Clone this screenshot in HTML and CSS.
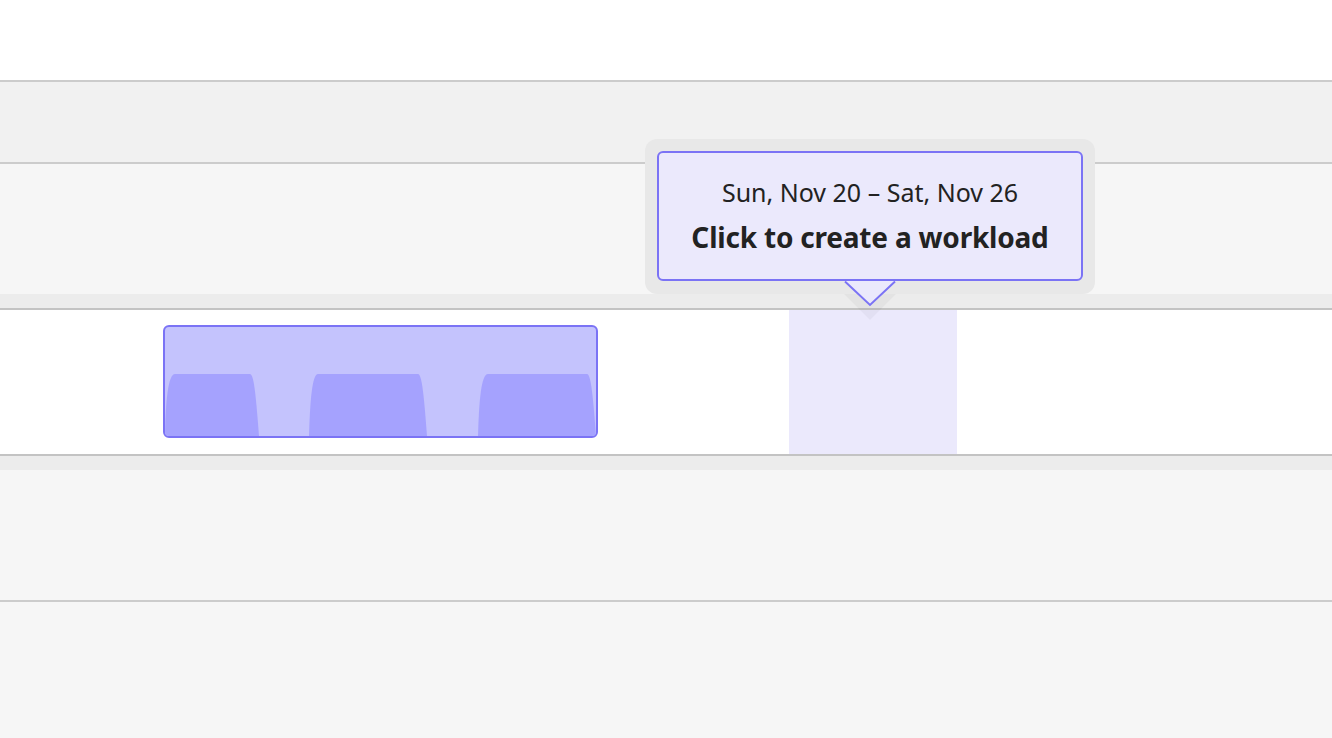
FILE: index.html
```html
<!DOCTYPE html>
<html>
<head>
<meta charset="utf-8">
<link rel="stylesheet" href="styles.css">
</head>
<body>
<div class="page">
  <div class="top-space"></div>
  <div class="band band-header"></div>
  <div class="band band-group"></div>
  <div class="gap-band"></div>
  <div class="row-lane">
    <div class="workload">
      <svg class="workload-chart" viewBox="0 0 431 109" preserveAspectRatio="none">
        <path d="M0,109 C0.5,75 3,47 10,47 L85,47 C89,47 91,70 94,109 Z"/>
        <path d="M144,109 C145,75 147,47 153,47 L253,47 C257,47 259,70 262,109 Z"/>
        <path d="M313,109 C314,75 316,47 323,47 L422,47 C426,47 428,70 431,109 Z"/>
      </svg>
    </div>
    <div class="week-hover"></div>
  </div>
  <div class="gap-band gap-band-bottom"></div>
  <div class="band band-lower"></div>
  <div class="band band-last"></div>

  <div class="tooltip">
    <div class="tooltip-box">
      <div class="tooltip-date">Sun, Nov 20 – Sat, Nov 26</div>
      <div class="tooltip-action">Click to create a workload</div>
    </div>
    <svg class="tooltip-arrow" width="56" height="42" viewBox="0 0 56 42">
      <polygon points="2,13 54,13 28,39" fill="rgba(0,0,0,0.035)"/>
      <polygon points="3,0 53,0 28,24" fill="#ebe9fc"/>
      <polyline points="3,0.5 28,24 53,0.5" fill="none" stroke="#7b73f5" stroke-width="2"/>
    </svg>
  </div>
</div>
</body>
</html>
```

FILE: styles.css
```css
html, body {
  margin: 0;
  padding: 0;
  background: #ffffff;
}

.page {
  position: relative;
  width: 1332px;
  height: 738px;
  overflow: hidden;
  font-family: "Noto Sans", "Open Sans", sans-serif;
  display: flex;
  flex-direction: column;
}

.top-space {
  height: 80px;
  background: #ffffff;
}

.band {
  border-top: 2px solid #cccccc;
}

.band-header {
  height: 80px;
  background: #f1f1f1;
}

.band-group {
  height: 130px;
  background: #f6f6f6;
}

.gap-band {
  height: 14px;
  background: #ececec;
}

.gap-band-bottom {
  height: 14px;
  border-top: 2px solid #c3c3c3;
}

.row-lane {
  height: 144px;
  border-top: 2px solid #c3c3c3;
  background: #ffffff;
  display: flex;
  padding-left: 163px;
}

.workload {
  align-self: flex-start;
  margin-top: 15px;
  width: 435px;
  height: 113px;
  box-sizing: border-box;
  border: 2px solid #7b73f5;
  border-radius: 6px;
  background: #c4c3fd;
  overflow: hidden;
}

.workload-chart {
  display: block;
  width: 431px;
  height: 109px;
  fill: #a5a2fe;
}

.week-hover {
  margin-left: 191px;
  width: 168px;
  background: #ebe9fc;
}

.band-lower {
  height: 130px;
  background: #f6f6f6;
  border-top: none;
}

.band-last {
  flex: 1;
  background: #f6f6f6;
}

.tooltip {
  position: absolute;
  left: 645px;
  top: 139px;
  width: 450px;
  height: 155px;
  box-sizing: border-box;
  padding: 12px;
  background: #e8e8e8;
  border-radius: 12px;
}

.tooltip-box {
  height: 130px;
  box-sizing: border-box;
  border: 2px solid #7b73f5;
  border-radius: 6px;
  background: #ebe9fc;
  color: #222222;
  text-align: center;
  padding-top: 22px;
}

.tooltip-date {
  font-size: 25px;
  line-height: 34px;
}

.tooltip-action {
  margin-top: 8px;
  font-size: 28px;
  font-weight: 700;
  letter-spacing: -0.2px;
  line-height: 40px;
}

.tooltip-arrow {
  position: absolute;
  left: 197px;
  top: 142px;
}
```
